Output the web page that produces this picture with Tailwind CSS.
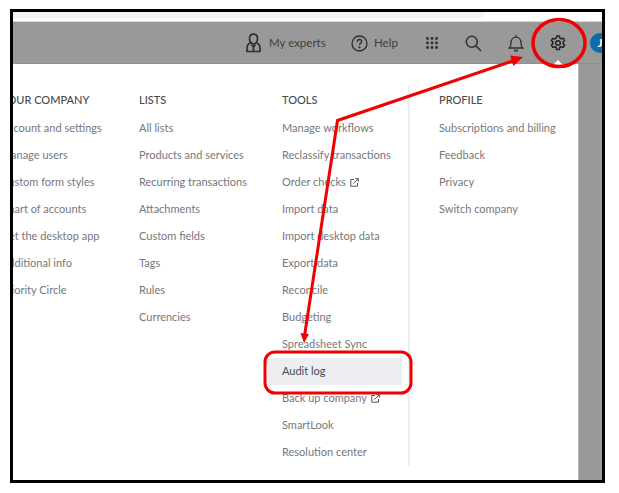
<!DOCTYPE html>
<html lang="en">
<head>
<meta charset="UTF-8" />
<title>Settings menu</title>
<script src="https://cdn.jsdelivr.net/npm/@tailwindcss/browser@4"></script>
</head>
<body class="bg-white">
<div class="relative w-[619px] h-[493px] bg-white font-['Lato',sans-serif] overflow-hidden">
  <!-- screenshot frame -->
  <div class="absolute left-[10px] top-[9px] w-[595px] h-[474px] border-[3px] border-black flex flex-col overflow-hidden bg-white">
    <div class="h-[9px] shrink-0 bg-white">
      <div class="h-[6px] w-[472px] bg-[#f3f4f5] rounded-br-[6px]"></div>
    </div>
    <!-- top bar -->
    <div class="h-[43px] shrink-0 pt-[1px] bg-[#999999] border-t border-t-[#d6d6d6] border-b border-b-[#8e8e8e] flex items-center text-[11.5px] text-[#404040] relative [&>*]:shrink-0">
      <div class="w-[233px]"></div>
      <svg class="w-[15px] h-[20px]" viewBox="0 0 15 20" fill="none" stroke="#2f2f2f" stroke-width="1.7"><path d="M7.5 1.2c2.6 0 4 1.9 4 4.4 0 2.900-1.700 5.300-4 5.300s-4-2.400-4-5.300c0-2.500 1.400-4.400 4-4.400z"/><path d="M4.500 9.800C2.300 10.800 1 12.500 1 15v3.500h13V15c0-2.500-1.300-4.200-3.500-5.200"/><path d="M5.500 11.500 7.500 14l2-2.500M7.500 14v4"/></svg>
      <span class="ml-[8px] w-[58px] whitespace-nowrap">My experts</span>
      <svg class="ml-[24px] w-[17px] h-[17px]" viewBox="0 0 17 17" fill="none" stroke="#2f2f2f" stroke-width="1.300"><circle cx="8.500" cy="8.500" r="7.500"/><path d="M6.300 6.700c0-1.300 1-2.200 2.200-2.200s2.200.8 2.200 2c0 1.700-2.200 1.700-2.200 3.400"/><circle cx="8.500" cy="12.300" r=".5" fill="#2f2f2f"/></svg>
      <span class="ml-[6px] w-[28px]">Help</span>
      <svg class="ml-[23px] w-[14px] h-[14px]" viewBox="0 0 14 14" fill="#2f2f2f"><circle cx="2.500" cy="2.500" r="1.400"/><circle cx="7" cy="2.500" r="1.400"/><circle cx="11.500" cy="2.500" r="1.400"/><circle cx="2.500" cy="7" r="1.400"/><circle cx="7" cy="7" r="1.400"/><circle cx="11.500" cy="7" r="1.400"/><circle cx="2.500" cy="11.500" r="1.400"/><circle cx="7" cy="11.500" r="1.400"/><circle cx="11.500" cy="11.500" r="1.400"/></svg>
      <svg class="ml-[26px] w-[17px] h-[17px]" viewBox="0 0 17 17" fill="none" stroke="#2f2f2f" stroke-width="1.500"><circle cx="6.800" cy="6.800" r="5.500"/><path d="M10.800 10.800 16 16"/></svg>
      <svg class="ml-[26px] w-[16px] h-[18px]" viewBox="0 0 16 18" fill="none" stroke="#2f2f2f" stroke-width="1.300"><path d="M1.200 14c1.300-1.200 1.800-2.500 1.800-5 0-3.300 2-5.800 5-5.800s5 2.500 5 5.800c0 2.500.5 3.800 1.800 5z"/><path d="M6.300 15.500c.3 1 .9 1.500 1.700 1.500s1.400-.5 1.700-1.500M8 3V1.200"/></svg>
      <svg class="ml-[26px] w-[16px] h-[16px]" viewBox="0 0 16 16" fill="none" stroke="#222222" stroke-width="1.500" stroke-linejoin="round"><circle cx="8" cy="8" r="2.300"/><path d="M6.700 1h2.600l.5 2 1.500.8 2-.6 1.300 2.300-1.500 1.400v1.700l1.500 1.400-1.300 2.300-2-.6-1.500.8-.5 2H6.700l-.5-2-1.500-.8-2 .6-1.300-2.300 1.500-1.400V7.100L1.400 5.700l1.300-2.300 2 .6 1.500-.8z"/></svg>
      <div class="ml-[24px] w-[20px] h-[20px] rounded-full bg-[#0f6ca6] text-white text-[12px] font-bold flex items-center justify-center">J</div>
    </div>
    <!-- dropdown over the dimmed page -->
    <div class="flex-1 flex bg-[#999999] min-h-0">
      <div class="relative w-[566px] shrink-0 bg-white border-r border-r-[#b5b5b5] flex pt-[24px] text-[11px] text-[#76777b] overflow-hidden">
        <div class="w-[126px] -ml-[12px] mr-[12px] shrink-0">
          <div class="h-[27px] pb-[2px] flex items-center text-[#4a4b4f] font-medium whitespace-nowrap">YOUR COMPANY</div>
          <div class="h-[27px] flex items-center whitespace-nowrap">Account and settings</div>
          <div class="h-[27px] flex items-center whitespace-nowrap">Manage users</div>
          <div class="h-[27px] flex items-center whitespace-nowrap">Custom form styles</div>
          <div class="h-[27px] flex items-center whitespace-nowrap">Chart of accounts</div>
          <div class="h-[27px] flex items-center whitespace-nowrap">Get the desktop app</div>
          <div class="h-[27px] flex items-center whitespace-nowrap">Additional info</div>
          <div class="h-[27px] flex items-center whitespace-nowrap">Priority Circle</div>
        </div>
        <div class="w-[143px] shrink-0">
          <div class="h-[27px] pb-[2px] flex items-center text-[#4a4b4f] font-medium">LISTS</div>
          <div class="h-[27px] flex items-center">All lists</div>
          <div class="h-[27px] flex items-center">Products and services</div>
          <div class="h-[27px] flex items-center">Recurring transactions</div>
          <div class="h-[27px] flex items-center">Attachments</div>
          <div class="h-[27px] flex items-center">Custom fields</div>
          <div class="h-[27px] flex items-center">Tags</div>
          <div class="h-[27px] flex items-center">Rules</div>
          <div class="h-[27px] flex items-center">Currencies</div>
        </div>
        <div class="w-[126px] shrink-0">
          <div class="h-[27px] pb-[2px] flex items-center text-[#4a4b4f] font-medium">TOOLS</div>
          <div class="h-[27px] flex items-center">Manage workflows</div>
          <div class="h-[27px] flex items-center">Reclassify transactions</div>
          <div class="h-[27px] flex items-center gap-[4px]">Order checks
            <svg class="w-[9px] h-[9px]" viewBox="0 0 9 9" fill="none" stroke="#55565b" stroke-width="1"><path d="M4 1.500H.8v6.700h6.700V5M3.500 5.500 8 1M5.300.7h3v3"/></svg>
          </div>
          <div class="h-[27px] flex items-center">Import data</div>
          <div class="h-[27px] flex items-center">Import desktop data</div>
          <div class="h-[27px] flex items-center">Export data</div>
          <div class="h-[27px] flex items-center">Reconcile</div>
          <div class="h-[27px] flex items-center">Budgeting</div>
          <div class="h-[27px] flex items-center">Spreadsheet Sync</div>
          <div class="h-[27px] flex items-center -ml-[15px] pl-[15px] w-[135px] bg-[#eceef1] text-[#4a4b4f]">Audit log</div>
          <div class="h-[27px] flex items-center gap-[4px]">Back up company
            <svg class="w-[9px] h-[9px]" viewBox="0 0 9 9" fill="none" stroke="#55565b" stroke-width="1"><path d="M4 1.500H.8v6.700h6.700V5M3.500 5.500 8 1M5.300.7h3v3"/></svg>
          </div>
          <div class="h-[27px] flex items-center">SmartLook</div>
          <div class="h-[27px] flex items-center">Resolution center</div>
        </div>
        <div class="border-l-2 border-l-[#eceef1] h-[381px] -mt-[3px] pl-[29px]">
          <div class="mt-[3px] h-[27px] pb-[2px] flex items-center text-[#4a4b4f] font-medium">PROFILE</div>
          <div class="h-[27px] flex items-center whitespace-nowrap">Subscriptions and billing</div>
          <div class="h-[27px] flex items-center">Feedback</div>
          <div class="h-[27px] flex items-center">Privacy</div>
          <div class="h-[27px] flex items-center">Switch company</div>
        </div>
      </div>
    </div>
  </div>
  <!-- menu notch under the gear -->
  <div class="absolute left-[553px] top-[60px] w-0 h-0 border-x-[5px] border-x-transparent border-b-[5px] border-b-white"></div>
  <!-- red annotations -->
  <svg class="absolute left-0 top-0 w-[619px] h-[493px]" viewBox="0 0 619 493" fill="none">
    <ellipse cx="559" cy="43" rx="26" ry="23.500" stroke="#f00000" stroke-width="3.500"/>
    <rect x="265" y="352" width="146" height="41" rx="10" stroke="#f00000" stroke-width="3"/>
    <path d="M304.500 336 337.500 120.500 514 60.500" stroke="#f00000" stroke-width="3"/>
    <path d="M523 57 510 55.500 513.500 66z" fill="#f00000"/>
    <path d="M304 343 300.500 333 309 334z" fill="#f00000"/>
  </svg>
</div>
</body>
</html>
